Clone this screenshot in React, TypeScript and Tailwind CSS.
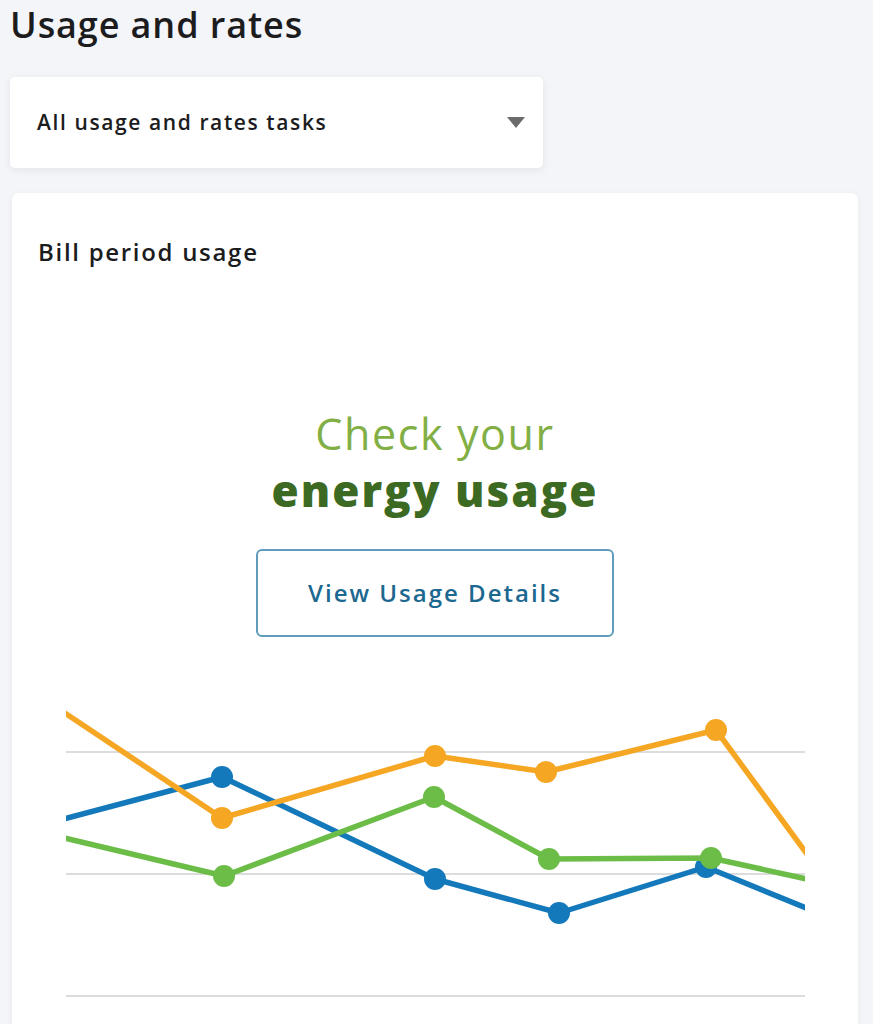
const ORANGE = '#f5a623'
const BLUE = '#1479bb'
const GREEN = '#6cbd48'

type Pt = [number, number]

const series: { color: string; line: Pt[]; dots: Pt[] }[] = [
  {
    color: BLUE,
    line: [[-10, 121], [156, 77], [369, 179], [493, 213], [640, 167], [745, 210]],
    dots: [[156, 77], [369, 179], [493, 213], [640, 167]],
  },
  {
    color: GREEN,
    line: [[-10, 136], [158, 176], [368, 97], [483, 159], [645, 158], [745, 180]],
    dots: [[158, 176], [368, 97], [483, 159], [645, 158]],
  },
  {
    color: ORANGE,
    line: [[-10, 7], [156, 118], [369, 56], [480, 72], [650, 30], [760, 180]],
    dots: [[156, 118], [369, 56], [480, 72], [650, 30]],
  },
]

function UsageChart() {
  return (
    <svg width={739} height={310} viewBox="0 0 739 310" className="block">
      {[52, 174, 296].map((y) => (
        <line key={y} x1={0} x2={739} y1={y} y2={y} stroke="#dcdcdc" strokeWidth={2} />
      ))}
      {series.map((s) => (
        <g key={s.color}>
          <polyline
            points={s.line.map((p) => p.join(',')).join(' ')}
            fill="none"
            stroke={s.color}
            strokeWidth={5.5}
            strokeLinejoin="round"
          />
          {s.dots.map(([x, y]) => (
            <circle key={`${x}-${y}`} cx={x} cy={y} r={11} fill={s.color} />
          ))}
        </g>
      ))}
    </svg>
  )
}

export default function App() {
  return (
    <div className="min-h-screen bg-[#f4f5f8] font-['Open_Sans',sans-serif] text-[#1c1c1e]">
      <div className="pl-[10px] pt-[4px]">
        <h1 className="text-[36px] font-semibold leading-[42px] tracking-[0.9px]">Usage and rates</h1>

        {/* Task selector */}
        <div className="mt-[31px] w-[533px] h-[91px] bg-white rounded-[5px] shadow-[0_2px_8px_rgba(0,0,0,0.07)] flex items-center justify-between pl-[27px] pr-[18px]">
          <span className="text-[21px] font-semibold tracking-[1.6px]">All usage and rates tasks</span>
          <svg width="18" height="12" viewBox="0 0 18 12">
            <path d="M0 0 H18 L9 11 Z" fill="#6b6b6b" />
          </svg>
        </div>
      </div>

      {/* Bill period card */}
      <div className="ml-[12px] mt-[25px] w-[846px] h-[831px] bg-white rounded-t-[7px] shadow-[0_2px_8px_rgba(0,0,0,0.05)] overflow-hidden">
        <h2 className="pl-[26px] pt-[44px] text-[24px] font-semibold leading-[30px] tracking-[1.7px]">Bill period usage</h2>

        <div className="flex flex-col items-center mt-[141px]">
          <p className="text-[43px] leading-[52px] text-[#82af45] font-normal tracking-[1.6px]">Check your</p>
          <p className="text-[44px] leading-[52px] text-[#3d6a22] font-extrabold mt-[4px] tracking-[2px]">energy usage</p>
          <button className="mt-[33px] w-[358px] h-[88px] rounded-[6px] border-2 border-[#5f9bbb] text-[#1d6890] text-[24px] font-semibold tracking-[2px]">
            View Usage Details
          </button>
        </div>

        <div className="ml-[54px] mt-[63px]">
          <UsageChart />
        </div>
      </div>
    </div>
  )
}
